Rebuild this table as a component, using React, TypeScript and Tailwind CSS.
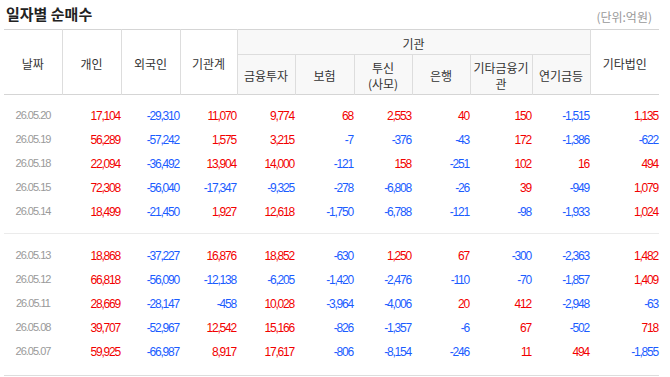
import React from 'react'

type Row = [string, ...string[]]

const group1: Row[] = [
  ['26.05.20', '17,104', '-29,310', '11,070', '9,774', '68', '2,553', '40', '150', '-1,515', '1,135'],
  ['26.05.19', '56,289', '-57,242', '1,575', '3,215', '-7', '-376', '-43', '172', '-1,386', '-622'],
  ['26.05.18', '22,094', '-36,492', '13,904', '14,000', '-121', '158', '-251', '102', '16', '494'],
  ['26.05.15', '72,308', '-56,040', '-17,347', '-9,325', '-278', '-6,808', '-26', '39', '-949', '1,079'],
  ['26.05.14', '18,499', '-21,450', '1,927', '12,618', '-1,750', '-6,788', '-121', '-98', '-1,933', '1,024'],
]

const group2: Row[] = [
  ['26.05.13', '18,868', '-37,227', '16,876', '18,852', '-630', '1,250', '67', '-300', '-2,363', '1,482'],
  ['26.05.12', '66,818', '-56,090', '-12,138', '-6,205', '-1,420', '-2,476', '-110', '-70', '-1,857', '1,409'],
  ['26.05.11', '28,669', '-28,147', '-458', '10,028', '-3,964', '-4,006', '20', '412', '-2,948', '-63'],
  ['26.05.08', '39,707', '-52,967', '12,542', '15,166', '-826', '-1,357', '-6', '67', '-502', '718'],
  ['26.05.07', '59,925', '-66,987', '8,917', '17,617', '-806', '-8,154', '-246', '11', '494', '-1,855'],
]

function DataRow({ row }: { row: Row }) {
  const [date, ...values] = row
  return (
    <tr className="h-[24px]">
      <td className="text-center text-[11px] tracking-[-1px] text-[#999]">{date}</td>
      {values.map((v, i) => (
        <td
          key={i}
          className={
            'pr-[1px] text-right text-[12px] tracking-[-1.2px] ' +
            (v.startsWith('-') ? 'text-[#1a5cff]' : 'text-[#f20000]')
          }
        >
          {v}
        </td>
      ))}
    </tr>
  )
}

export default function App() {
  const th = 'border-l border-[#dddddd] font-normal text-[12px] text-[#333] align-middle pt-[3px]'
  const sub = th + ' bg-[#f8f8f8] leading-[16px]'

  return (
    <div className="w-[670px] h-[377px] bg-white pl-[4px] font-['Liberation_Sans',sans-serif]">
      <div className="flex h-[29px] w-[655px] items-center justify-between font-['Noto_Sans_CJK_KR',sans-serif]">
        <h1 className="ml-[2px] text-[15px] font-bold text-[#222]">일자별 순매수</h1>
        <span className="mt-[5px] mr-[7px] text-[12px] text-[#999]">(단위:억원)</span>
      </div>

      <table className="w-[655px] table-fixed border-collapse">
        <colgroup>
          <col className="w-[58px]" />
          <col className="w-[59px]" />
          <col className="w-[59px]" />
          <col className="w-[57px]" />
          <col className="w-[58px]" />
          <col className="w-[59px]" />
          <col className="w-[58px]" />
          <col className="w-[58px]" />
          <col className="w-[62px]" />
          <col className="w-[58px]" />
          <col className="w-[69px]" />
        </colgroup>
        <thead className="font-['Noto_Sans_CJK_KR',sans-serif]">
          <tr className="h-[25px] border-t border-[#d5d5d5]">
            <th rowSpan={2} className="font-normal text-[12px] text-[#333] align-middle pt-[3px]">날짜</th>
            <th rowSpan={2} className={th}>개인</th>
            <th rowSpan={2} className={th}>외국인</th>
            <th rowSpan={2} className={th}>기관계</th>
            <th colSpan={6} className={sub}>기관</th>
            <th rowSpan={2} className={th}>기타법인</th>
          </tr>
          <tr className="h-[40px] border-t border-[#dddddd]">
            <th className={sub}>금융투자</th>
            <th className={sub}>보험</th>
            <th className={sub}>
              투신
              <br />
              (사모)
            </th>
            <th className={sub}>은행</th>
            <th className={sub}>
              기타금융기
              <br />관
            </th>
            <th className={sub}>연기금등</th>
          </tr>
        </thead>
        <tbody className="border-t border-[#d5d5d5]">
          <tr className="h-[9px]">
            <td colSpan={11} />
          </tr>
          {group1.map((r) => (
            <DataRow key={r[0]} row={r} />
          ))}
          <tr className="h-[10px]">
            <td colSpan={11} />
          </tr>
        </tbody>
        <tbody className="border-t border-[#ebebeb]">
          <tr className="h-[10px]">
            <td colSpan={11} />
          </tr>
          {group2.map((r) => (
            <DataRow key={r[0]} row={r} />
          ))}
          <tr className="h-[12px] border-b border-[#dddddd]">
            <td colSpan={11} />
          </tr>
        </tbody>
      </table>
    </div>
  )
}
